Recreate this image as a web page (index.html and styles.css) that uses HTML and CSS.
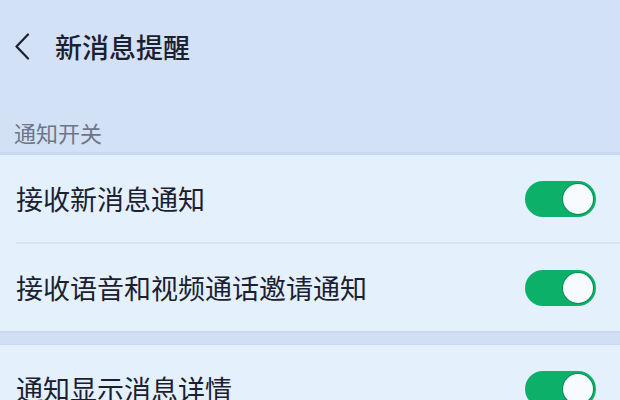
FILE: index.html
```html
<!DOCTYPE html>
<html lang="zh-CN">
<head>
<meta charset="utf-8">
<title>新消息提醒</title>
<link rel="stylesheet" href="styles.css">
</head>
<body>
<header class="topbar">
  <span class="back" aria-label="返回">
    <svg width="16" height="27" viewBox="0 0 16 27"><path d="M14 1.5 L2.5 13.5 L14 25.5" fill="none" stroke="#1b2030" stroke-width="2.2" stroke-linecap="round" stroke-linejoin="round"/></svg>
  </span>
  <h1 class="title">新消息提醒</h1>
</header>
<div class="section-label">通知开关</div>
<section class="group">
  <div class="row">
    <span class="row-text">接收新消息通知</span>
    <span class="toggle on"><span class="knob"></span></span>
  </div>
  <div class="divider"></div>
  <div class="row">
    <span class="row-text">接收语音和视频通话邀请通知</span>
    <span class="toggle on"><span class="knob"></span></span>
  </div>
</section>
<div class="band"></div>
<section class="group">
  <div class="row">
    <span class="row-text">通知显示消息详情</span>
    <span class="toggle on"><span class="knob"></span></span>
  </div>
</section>
</body>
</html>
```
FILE: styles.css
```css
html, body {
  margin: 0;
  padding: 0;
}
body {
  background: #d3e1f6;
  font-family: "Noto Sans CJK SC", "Noto Sans", sans-serif;
  color: #1b2030;
  width: 620px;
  height: 400px;
  overflow: hidden;
}
.topbar {
  height: 94px;
  display: flex;
  align-items: center;
  padding-left: 14px;
  box-sizing: border-box;
}
.back {
  display: flex;
  width: 16px;
  height: 27px;
  margin-top: -1px;
}
.title {
  margin: 0 0 0 25px;
  font-size: 27px;
  font-weight: 500;
  line-height: 1;
  margin-top: -2px;
}
.section-label {
  height: 61px;
  box-sizing: border-box;
  padding: 22px 0 0 14px;
  font-size: 22px;
  line-height: 32px;
  color: #6d7687;
  border-bottom: 3px solid #c9d8ef;
}
.group {
  background: #e5f0fd;
}
.row {
  height: 87px;
  display: flex;
  align-items: center;
  justify-content: space-between;
  padding: 0 24px 0 16px;
}
.row-text {
  font-size: 27px;
  line-height: 1;
  margin-top: -1px;
}
.divider {
  height: 2px;
  margin-left: 16px;
  background: #d6e3f6;
}
.band {
  height: 11px;
  background: #d0dff5;
  border-top: 2px solid #c9d8ef;
  border-bottom: 1px solid #c9d8ef;
}
.toggle {
  width: 71px;
  height: 36px;
  border-radius: 18px;
  background: #0cb069;
  display: flex;
  align-items: center;
  justify-content: flex-end;
  padding-right: 3px;
  box-sizing: border-box;
  flex-shrink: 0;
}
.knob {
  width: 30px;
  height: 30px;
  border-radius: 50%;
  background: #f7fbff;
  box-shadow: 0 0 0 1px rgba(0, 90, 50, 0.35);
}
```
